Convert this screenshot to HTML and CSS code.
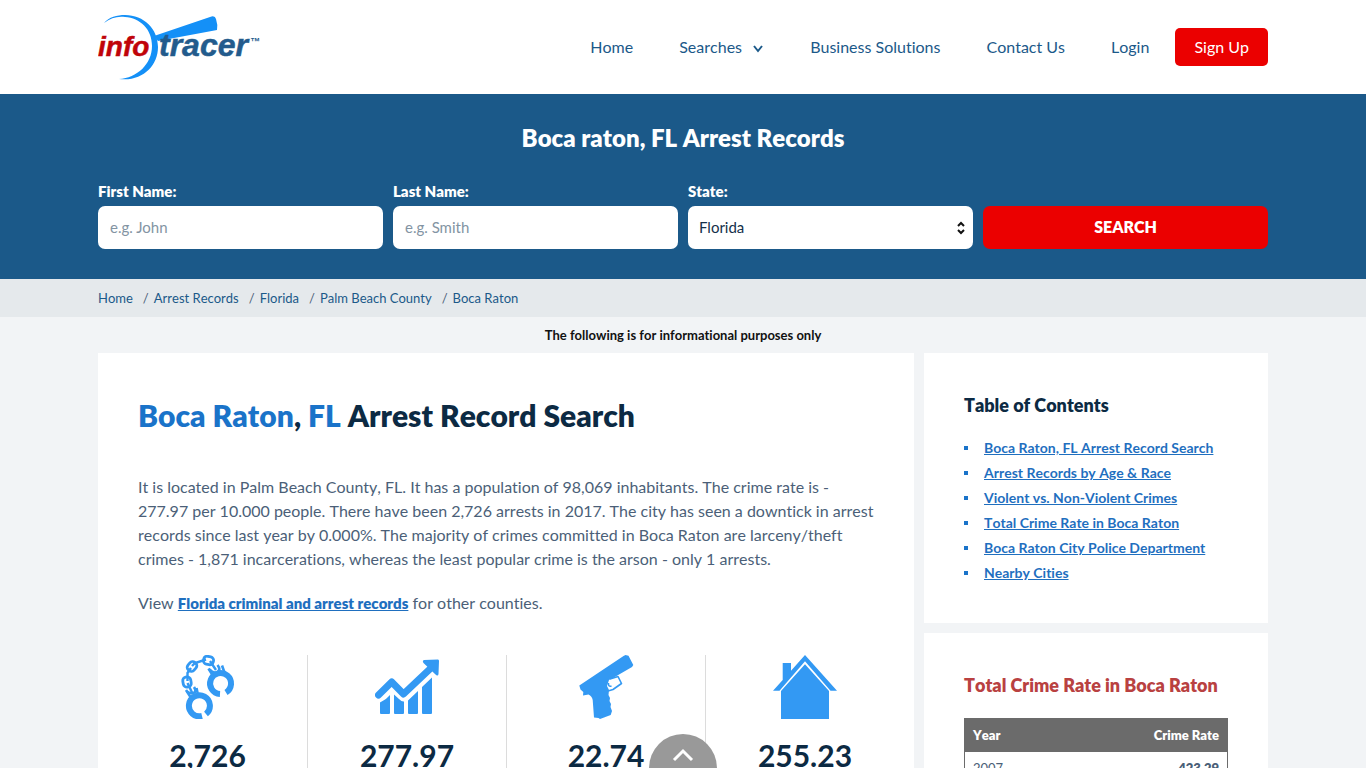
FILE: index.html
```html
<!DOCTYPE html>
<html lang="en">
<head>
<meta charset="utf-8">
<meta name="viewport" content="width=device-width, initial-scale=1">
<title>Boca Raton, FL Arrest Records</title>
<link rel="stylesheet" href="styles.css">
</head>
<body>
<header class="header">
  <div class="container header-inner">
    <a class="logo" href="#" aria-label="InfoTracer">
      <svg width="164" height="70" viewBox="0 0 164 70" aria-hidden="true">
        <path fill="#1490f7" d="M6 11C11 5 19 3 27 3C46 3 60 17 60 35C60 54 44 70 21 67C39 66 54 52 54 34C54 17 42 6 27 5C19 4 13 6 6 11Z"/>
        <path fill="#1490f7" d="M56 24L112 5Q117 3 118 7Q120 13 119 18L60 29Z"/>
        <text class="logo-info" x="0" y="44">info</text>
        <text class="logo-tracer" x="61" y="44">tracer</text>
        <text class="logo-tm" x="152" y="33">™</text>
      </svg>
    </a>
    <nav class="nav">
      <a href="#">Home</a>
      <a href="#">Searches
        <svg class="chevron" width="12" height="8" viewBox="0 0 12 8" aria-hidden="true"><path d="M2 1L6 6L10 1"/></svg>
      </a>
      <a href="#">Business Solutions</a>
      <a href="#">Contact Us</a>
      <a href="#">Login</a>
      <a class="signup" href="#">Sign Up</a>
    </nav>
  </div>
</header>

<section class="hero">
  <div class="container">
    <h2 class="hero-title">Boca raton, FL Arrest Records</h2>
    <form class="search">
      <div class="field">
        <label for="first">First Name:</label>
        <input id="first" type="text" placeholder="e.g. John">
      </div>
      <div class="field">
        <label for="last">Last Name:</label>
        <input id="last" type="text" placeholder="e.g. Smith">
      </div>
      <div class="field">
        <label for="state">State:</label>
        <div class="select-wrap">
          <select id="state"><option>Florida</option></select>
          <svg class="select-arrows" width="8" height="14" viewBox="0 0 8 14" aria-hidden="true"><path d="M1 5L4 2L7 5M1 9L4 12L7 9"/></svg>
        </div>
      </div>
      <button class="search-button" type="button">SEARCH</button>
    </form>
  </div>
</section>

<nav class="crumbs" aria-label="Breadcrumb">
  <ol class="container">
    <li><a href="#">Home</a></li>
    <li><a href="#">Arrest Records</a></li>
    <li><a href="#">Florida</a></li>
    <li><a href="#">Palm Beach County</a></li>
    <li><a href="#">Boca Raton</a></li>
  </ol>
</nav>

<p class="notice">The following is for informational purposes only</p>

<div class="container columns">
  <main class="card main-card">
    <h1><span>Boca Raton</span>, <span>FL</span> Arrest Record Search</h1>
    <p>It is located in Palm Beach County, FL. It has a population of 98,069 inhabitants. The crime rate is -<wbr>277.97 per 10.000 people. There have been 2,726 arrests in 2017. The city has seen a downtick in arrest records since last year by 0.000%. The majority of crimes committed in Boca Raton are larceny/theft crimes - 1,871 incarcerations, whereas the least popular crime is the arson - only 1 arrests.</p>
    <p>View <a class="link" href="#">Florida criminal and arrest records</a> for other counties.</p>
    <div class="stats">
      <div class="stat">
        <svg width="64" height="64" viewBox="0 0 64 64" aria-hidden="true">
          <g fill="none" stroke="#3399f3">
            <path stroke-width="6" d="M50 37.500A10.500 10.500 0 1 0 44 39"/>
            <path stroke-width="6" d="M30 59A10.500 10.500 0 1 0 26 61"/>
            <path stroke-width="2.600" d="M36.500 20L32.500 13.500M49 19L46 10.500M14.500 42L10 35M22 40L20.500 33"/>
            <path stroke-width="2.600" d="M33.500 14.500Q39 20 42.500 16Q44.500 14 41.500 10M11 36.500Q16 40 19 37Q20 35 18 32"/>
            <g stroke-width="2.800">
              <rect x="27.500" y="1.500" width="10" height="8" rx="3.500" transform="rotate(12 32.500 5.500)"/>
              <rect x="11" y="7.500" width="10" height="8" rx="3.500" transform="rotate(-50 16 11.500)"/>
              <rect x="6" y="23" width="10" height="8" rx="3.500" transform="rotate(80 11 27)"/>
            </g>
            <path stroke-width="2.400" d="M16 11L19 8L30 4.500M15 13L11.500 18V26M11.500 28L16 37.500M34 6L40 15"/>
          </g>
        </svg>
        <strong>2,726</strong>
      </div>
      <div class="stat">
        <svg width="64" height="64" viewBox="0 0 64 64" aria-hidden="true">
          <path fill="none" stroke="#3399f3" stroke-width="7" stroke-linecap="round" stroke-linejoin="round" d="M3.500 40L16.700 27L28.500 39L56 13"/>
          <path fill="#3399f3" d="M49 5L63 4.500Q64 4.500 64 6L63.500 19Q63 22 60 19L48.500 8Q47 5.500 49 5ZM5 47.500Q11 45 15 40V58Q15 59 14 59H6Q5 59 5 58ZM19 39.500L24 44Q27 47 29 46.500V58Q29 59 28 59H20Q19 59 19 58ZM33 45.500L43 36V58Q43 59 42 59H34Q33 59 33 58ZM47 32L57 22.500V58Q57 59 56 59H48Q47 59 47 58Z"/>
        </svg>
        <strong>277.97</strong>
      </div>
      <div class="stat">
        <svg width="64" height="64" viewBox="0 0 64 64" aria-hidden="true">
          <path fill="#3399f3" d="M5.300 30.500L49.500 1L51.500 0L54.500 .800L59.300 10L58 12L39 23L35 25L33 31L35 35L34.500 40L36 43L35.500 46L37 49L36.500 52L38 56L36.700 60L26 64L24.500 63L20 62.500L18.700 45Q18 41 14.500 39.500L9 40.500L9.300 37L6.500 34.500Z"/>
          <path fill="none" stroke="#3399f3" stroke-width="1.600" stroke-linejoin="round" d="M36 24L44 21.500L47.500 28.500L39 34.500L34 36M37.500 31Q34 32 34.500 28"/>
        </svg>
        <strong>22.74</strong>
      </div>
      <div class="stat">
        <svg width="64" height="64" viewBox="0 0 64 64" aria-hidden="true">
          <path fill="#3399f3" d="M32 0L64 35.700H57.500L32 6.300L6.500 35.700H0L9.700 25V8H18V15.700ZM32 9.300L56 36V64H8V36Z"/>
        </svg>
        <strong>255.23</strong>
      </div>
    </div>
  </main>

  <aside class="sidebar">
    <section class="card side-card">
      <h3>Table of Contents</h3>
      <ul class="toc">
        <li><a class="link" href="#">Boca Raton, FL Arrest Record Search</a></li>
        <li><a class="link" href="#">Arrest Records by Age &amp; Race</a></li>
        <li><a class="link" href="#">Violent vs. Non-Violent Crimes</a></li>
        <li><a class="link" href="#">Total Crime Rate in Boca Raton</a></li>
        <li><a class="link" href="#">Boca Raton City Police Department</a></li>
        <li><a class="link" href="#">Nearby Cities</a></li>
      </ul>
    </section>
    <section class="card side-card">
      <h3 class="red">Total Crime Rate in Boca Raton</h3>
      <table class="rates">
        <thead><tr><th>Year</th><th>Crime Rate</th></tr></thead>
        <tbody><tr><td>2007</td><td>423.29</td></tr></tbody>
      </table>
    </section>
  </aside>
</div>

<button class="to-top" type="button" aria-label="Back to top">
  <svg width="22" height="14" viewBox="0 0 22 14" aria-hidden="true"><path d="M2 12L11 3L20 12"/></svg>
</button>
</body>
</html>
```

FILE: styles.css
```css
* {
  box-sizing: border-box;
}

body {
  margin: 0;
  height: 100vh;
  overflow: hidden;
  background: #f2f4f6;
  color: #4b5f78;
  font: 16px/24px Lato, "Open Sans", sans-serif;
  font-kerning: none;
  font-variant-ligatures: none;
}

a {
  color: #1b5989;
  text-decoration: none;
}

.container {
  width: 100%;
  max-width: 1170px;
  margin: 0 auto;
}

.header {
  background: #fff;
}

.header-inner {
  display: flex;
  align-items: center;
  justify-content: space-between;
  height: 94px;
}

.logo svg {
  display: block;
}

.logo-info {
  fill: #c00309;
  stroke: #c00309;
  stroke-width: 0.5;
  font: italic 700 28px "Liberation Sans", sans-serif;
}

.logo-tracer,
.logo-tm {
  fill: #235b8c;
}

.logo-tracer {
  stroke: #235b8c;
  stroke-width: 0.5;
  font: italic 700 32px "Liberation Sans", sans-serif;
}

.logo-tm {
  font: italic 700 10px "Liberation Sans", sans-serif;
}

.nav {
  display: flex;
  align-items: center;
  gap: 46px;
}

.chevron {
  margin-left: 6px;
  fill: none;
  stroke: #1b5989;
  stroke-width: 2;
}

.nav .signup {
  margin-left: -20px;
  padding: 7px 19px;
  border-radius: 5px;
  background: #eb0000;
  color: #fff;
}

.hero {
  padding: 28px 0 30px;
  background: #1b5989;
  color: #fff;
}

.hero-title {
  margin: 0 0 28px;
  font-size: 24px;
  font-weight: 800;
  line-height: 32px;
  text-align: center;
}

.search {
  display: grid;
  grid-template-columns: repeat(4, 1fr);
  align-items: end;
  gap: 10px;
}

.field label {
  display: block;
  margin-bottom: 6px;
  font-size: 15px;
  font-weight: 800;
  line-height: 18px;
}

.field input,
.field select,
.search-button {
  display: block;
  width: 100%;
  height: 43px;
  border: 0;
  border-radius: 7px;
  background: #fff;
  color: #14304a;
  font: 15px Lato, sans-serif;
}

.field input {
  padding: 0 12px 2px;
}

.field input::placeholder {
  color: #8394a3;
}

.select-wrap {
  position: relative;
}

.field select {
  padding: 0 11px 2px;
  appearance: none;
}

.select-arrows {
  position: absolute;
  top: 15px;
  right: 8px;
  fill: none;
  stroke: #111;
  stroke-width: 2;
  pointer-events: none;
}

.search .search-button {
  padding: 0 0 2px;
  background: #eb0000;
  color: #fff;
  font-size: 16px;
  font-weight: 800;
}

.crumbs {
  background: #e5e9ec;
  font-size: 13px;
}

.crumbs ol {
  display: flex;
  gap: 10px;
  padding: 7px 0;
  list-style: none;
}

.crumbs li + li::before {
  content: "/";
  margin-right: 5px;
}

.notice {
  margin: 0;
  padding: 8px 0 8px;
  color: #111;
  font-size: 13px;
  font-weight: 700;
  line-height: 20px;
  text-align: center;
}

.columns {
  display: grid;
  grid-template-columns: minmax(0, 1fr) 344px;
  gap: 10px;
}

.card {
  padding: 40px;
  background: #fff;
}

.main-card h1 {
  margin: 0 0 38px;
  color: #0c2a43;
  font-size: 30px;
  font-weight: 800;
  line-height: 44px;
}

.main-card h1 span {
  color: #1a73c9;
}

.main-card p {
  margin: 0 0 20px;
}

.link {
  color: #1f6fbf;
  font-weight: 700;
  text-decoration: underline;
}

.main-card .link {
  font-size: 15px;
  font-weight: 800;
}

.stats {
  display: grid;
  grid-template-columns: repeat(4, 1fr);
  margin: 40px -30px 0;
}

.stat {
  display: flex;
  flex-direction: column;
  align-items: center;
  gap: 16px;
  padding-bottom: 40px;
}

.stat + .stat {
  border-left: 1px solid #dcdcdc;
}

.stat strong {
  color: #0c2a43;
  font-size: 30px;
  line-height: 40px;
}

.sidebar {
  display: flex;
  flex-direction: column;
  gap: 10px;
}

.side-card {
  padding-bottom: 38px;
}

.side-card h3 {
  margin: 0 0 18px;
  color: #0c2a43;
  font-size: 18px;
  font-weight: 800;
}

.side-card .red {
  margin-bottom: 21px;
  color: #b94141;
}

.toc {
  margin: 0;
  padding: 0 0 0 20px;
  list-style: none;
  font-size: 14px;
  line-height: 25px;
}

.toc li::before {
  content: "";
  float: left;
  width: 4px;
  height: 4px;
  margin: 11px 0 0 -20px;
  background: #1a73c9;
}

.rates {
  width: 100%;
  border: 1px solid #6b6b6b;
  border-collapse: collapse;
  font-size: 13px;
  line-height: 17px;
}

.rates th,
.rates td {
  padding: 8px;
  text-align: left;
}

.rates th {
  background: #6b6b6b;
  color: #fff;
  font-weight: 800;
}

.rates th:last-child,
.rates td:last-child {
  font-weight: 800;
  text-align: right;
}

.to-top {
  position: fixed;
  bottom: -34px;
  left: 50%;
  width: 68px;
  height: 68px;
  margin-left: -34px;
  padding: 0 0 24px;
  border: 0;
  border-radius: 50%;
  background: #999;
}

.to-top path {
  fill: none;
  stroke: #fff;
  stroke-width: 3;
}
```
